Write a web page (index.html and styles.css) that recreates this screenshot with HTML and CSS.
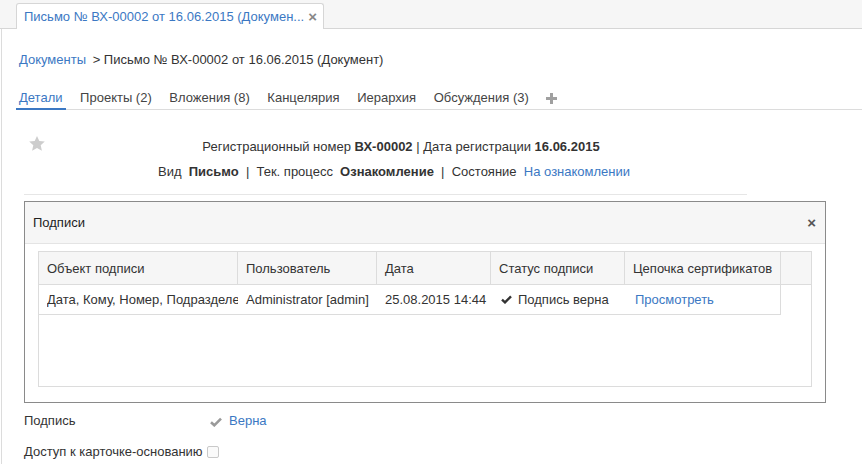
FILE: index.html
```html
<!DOCTYPE html>
<html lang="ru">
<head>
<meta charset="utf-8">
<title>Письмо № ВХ-00002</title>
<link rel="stylesheet" href="styles.css">
</head>
<body>
<div class="topbar">
  <div class="doc-tab">
    <span class="doc-tab-title">Письмо № ВХ-00002 от 16.06.2015 (Докумен...</span>
    <span class="doc-tab-close">×</span>
  </div>
</div>
<div class="page">
  <div class="breadcrumb"><a class="link">Документы</a><span class="crumb-sep"> &gt; </span>Письмо № ВХ-00002 от 16.06.2015 (Документ)</div>
  <div class="tabs">
    <span class="tab active">Детали</span>
    <span class="tab">Проекты (2)</span>
    <span class="tab">Вложения (8)</span>
    <span class="tab">Канцелярия</span>
    <span class="tab">Иерархия</span>
    <span class="tab">Обсуждения (3)</span>
    <span class="tab tab-add"><svg width="11" height="11" viewBox="0 0 11 11"><rect x="4" y="0" width="3" height="11" fill="#a0a0a0"/><rect x="0" y="4" width="11" height="3" fill="#a0a0a0"/></svg></span>
  </div>
  <div class="info">
    <div class="star"><svg width="16" height="15" viewBox="0 0 16 15"><polygon points="8,0 10.3,5 15.8,5.6 11.7,9.3 12.9,14.8 8,12 3.1,14.8 4.3,9.3 0.2,5.6 5.7,5" fill="#cdcdcd"/></svg></div>
    <div class="info-line">Регистрационный номер <b>ВХ-00002</b> | Дата регистрации <b>16.06.2015</b></div>
    <div class="info-line info-line-2">Вид&nbsp; <b>Письмо</b> &nbsp;|&nbsp; Тек. процесс&nbsp; <b>Ознакомление</b> &nbsp;|&nbsp; Состояние&nbsp; <a class="link">На ознакомлении</a></div>
  </div>
  <div class="divider"></div>
  <div class="form">
    <div class="form-row">
      <span class="form-label">Подпись</span>
      <span class="form-value"><svg class="ok" width="12" height="10" viewBox="0 0 12 10"><path d="M1 5.2 L4.3 8.3 L11 1.6" stroke="#9a9a9a" stroke-width="2.6" fill="none"/></svg><a class="link">Верна</a></span>
    </div>
    <div class="form-row">
      <span>Доступ к карточке-основанию</span>
      <span class="checkbox"></span>
    </div>
  </div>

  <div class="dialog">
    <div class="dialog-head">
      <span class="dialog-title">Подписи</span>
      <span class="dialog-close">×</span>
    </div>
    <div class="dialog-body">
      <div class="grid">
        <div class="grid-head">
          <div class="cell c1">Объект подписи</div>
          <div class="cell c2">Пользователь</div>
          <div class="cell c3">Дата</div>
          <div class="cell c4">Статус подписи</div>
          <div class="cell c5">Цепочка сертификатов</div>
          <div class="cell c6"></div>
        </div>
        <div class="grid-row">
          <div class="cell c1"><span class="clip">Дата, Кому, Номер, Подразделение</span></div>
          <div class="cell c2">Administrator [admin]</div>
          <div class="cell c3">25.08.2015 14:44</div>
          <div class="cell c4"><svg class="tick" width="11" height="9" viewBox="0 0 11 9"><path d="M1 4.6 L4 7.4 L10 1.4" stroke="#333" stroke-width="2.4" fill="none"/></svg>Подпись верна</div>
          <div class="cell c5 cell-link"><a class="link">Просмотреть</a></div>
        </div>
      </div>
    </div>
  </div>
</div>
</body>
</html>
```
FILE: styles.css
```css
html, body {
  margin: 0;
  padding: 0;
  background: #fff;
}
body {
  font-family: "Liberation Sans", Arial, sans-serif;
  font-size: 13px;
  color: #333;
  width: 862px;
  height: 464px;
  overflow: hidden;
}
.link {
  color: #3b78c3;
  text-decoration: none;
}
b { font-weight: bold; color: #333; }

.topbar {
  height: 28px;
  background: #f6f6f6;
  border-bottom: 1px solid #d6d6d6;
  display: flex;
  align-items: flex-end;
  padding-left: 16px;
}
.doc-tab {
  box-sizing: border-box;
  width: 308px;
  height: 26px;
  margin-bottom: -1px;
  background: #fff;
  border: 1px solid #d6d6d6;
  border-bottom: none;
  border-radius: 3px 3px 0 0;
  padding: 0 6px 0 7px;
  display: flex;
  align-items: center;
  justify-content: space-between;
}
.doc-tab-title {
  color: #3b78c3;
  white-space: nowrap;
}
.doc-tab-close {
  color: #888;
  font-size: 15px;
  font-weight: bold;
  line-height: 1;
}

.page {
  position: relative;
  margin-left: 1px;
  border-left: 1px solid #dcdcdc;
  padding-left: 14px;
  height: 435px;
}
.breadcrumb {
  padding-top: 21px;
  line-height: 20px;
  padding-left: 3px;
}
.crumb-sep { margin-left: 3px; }

.tabs {
  margin-top: 19px;
  display: flex;
  align-items: flex-end;
  gap: 11.6px;
  border-bottom: 1px solid #dcdcdc;
}
.tab {
  padding: 0 3px 1px;
  line-height: 18px;
  border-bottom: 2px solid transparent;
  margin-bottom: -1px;
  color: #444;
  white-space: nowrap;
}
.tab.active {
  color: #3b78c3;
  border-bottom-color: #3b78c3;
}
.tab-add {
  display: flex;
  align-items: center;
  height: 18px;
  padding-left: 3px;
}

.info {
  position: relative;
  margin-top: 27px;
  width: 770px;
}
.star {
  position: absolute;
  left: 13px;
  top: -1px;
}
.info-line {
  text-align: center;
  line-height: 20px;
  white-space: nowrap;
}
.info-line-2 {
  margin-top: 5px;
  padding-right: 14px;
}
.divider {
  margin: 12px 0 0 8px;
  width: 723px;
  border-top: 1px solid #e6e6e6;
}

.form {
  margin-top: 216px;
  padding-left: 8px;
}
.form-row {
  display: flex;
  align-items: center;
  line-height: 20px;
}
.form-row + .form-row {
  margin-top: 11px;
}
.form-label {
  width: 186px;
}
.form-value {
  display: flex;
  align-items: center;
  gap: 7px;
}
.ok { margin-top: 1px; }
.checkbox {
  display: inline-block;
  box-sizing: border-box;
  width: 12px;
  height: 12px;
  border: 1px solid #c9c9c9;
  border-radius: 2px;
  background: #fafafa;
  margin-left: 4px;
}

.dialog {
  position: absolute;
  left: 22px;
  top: 172px;
  width: 802px;
  height: 202px;
  box-sizing: border-box;
  border: 1px solid #8a8a8a;
  background: #fff;
}
.dialog-head {
  height: 42px;
  box-sizing: border-box;
  background: #f6f6f6;
  border-bottom: 1px solid #e4e4e4;
  display: flex;
  align-items: center;
  justify-content: space-between;
  padding: 0 9px 0 8px;
}
.dialog-title {
  color: #222;
}
.dialog-close {
  color: #555;
  font-weight: bold;
  font-size: 15px;
  line-height: 1;
}
.dialog-body {
  padding: 7px 13px 0;
}
.grid {
  box-sizing: border-box;
  height: 136px;
  border: 1px solid #dcdcdc;
}
.grid-head, .grid-row {
  display: flex;
}
.grid-head {
  height: 32px;
  background: #f6f6f6;
  border-bottom: 1px solid #dcdcdc;
}
.grid-row {
  height: 30px;
  width: 742px;
  box-sizing: border-box;
  border-bottom: 1px solid #dcdcdc;
  border-right: 1px solid #dcdcdc;
}
.cell {
  box-sizing: border-box;
  padding: 0 8px;
  display: flex;
  align-items: center;
  white-space: nowrap;
  overflow: hidden;
}
.grid-head .cell {
  border-right: 1px solid #dcdcdc;
}
.grid-head .c6 { border-right: none; flex: 1; }
.c1 { width: 199px; }
.c2 { width: 139px; }
.c3 { width: 114px; }
.c4 { width: 134px; }
.c5 { width: 156px; }
.grid-row .c5 { width: 155px; }
.grid-row .c1 { padding-right: 0; }
.clip {
  display: block;
  overflow: hidden;
  white-space: nowrap;
  width: 191px;
}
.grid-row .c4 { padding-left: 10px; }
.tick { margin-right: 6px; }
.cell-link { padding-left: 10px; }
```
